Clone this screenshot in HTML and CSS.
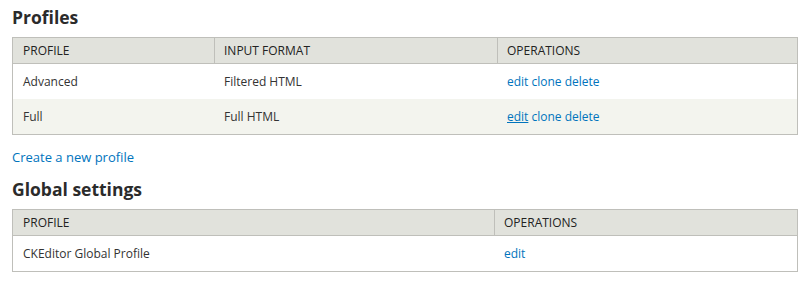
FILE: index.html
```html
<!DOCTYPE html>
<html lang="en">
<head>
<meta charset="utf-8">
<title>Profiles</title>
<link rel="stylesheet" href="styles.css">
</head>
<body>
<h2 class="section-title">Profiles</h2>
<table class="data-table">
  <thead>
    <tr>
      <th class="c-profile">Profile</th>
      <th class="c-format">Input format</th>
      <th class="c-ops">Operations</th>
    </tr>
  </thead>
  <tbody>
    <tr class="odd">
      <td>Advanced</td>
      <td>Filtered HTML</td>
      <td><a href="#">edit</a> <a href="#">clone</a> <a href="#">delete</a></td>
    </tr>
    <tr class="even">
      <td>Full</td>
      <td>Full HTML</td>
      <td><a href="#" class="hover">edit</a> <a href="#">clone</a> <a href="#">delete</a></td>
    </tr>
  </tbody>
</table>
<p class="create"><a href="#">Create a new profile</a></p>
<h2 class="section-title second">Global settings</h2>
<table class="data-table">
  <thead>
    <tr>
      <th class="c-gprofile">Profile</th>
      <th class="c-gops">Operations</th>
    </tr>
  </thead>
  <tbody>
    <tr class="odd">
      <td>CKEditor Global Profile</td>
      <td><a href="#">edit</a></td>
    </tr>
  </tbody>
</table>
</body>
</html>
```
FILE: styles.css
```css
html, body {
  background: #fff;
}
body {
  margin: 0;
  padding: 7px 12px 0 12px;
  font-family: "Open Sans", "Noto Sans", sans-serif;
  font-size: 12px;
  color: #333;
}
a {
  color: #0074bd;
  text-decoration: none;
}
a.hover {
  text-decoration: underline;
}
.section-title {
  margin: 0 0 10px 0;
  font-size: 17.5px;
  line-height: 20px;
  font-weight: bold;
  color: #2b2b2b;
}
.section-title.second {
  margin-top: 13px;
  margin-bottom: 10px;
}
.data-table {
  width: 786px;
  table-layout: fixed;
  border-collapse: separate;
  border-spacing: 0;
  border: 1px solid #bfbfba;
}
.data-table th {
  box-sizing: border-box;
  height: 26px;
  padding: 0 10px;
  background: #e1e2dc;
  border-bottom: 1px solid #bfbfba;
  text-align: left;
  text-transform: uppercase;
  font-weight: normal;
  font-size: 12px;
  color: #222;
}
.data-table th + th {
  border-left: 1px solid #bfbfba;
  padding-left: 9px;
}
.data-table td {
  height: 35px;
  padding: 0 10px;
  vertical-align: middle;
}
.data-table tr.even td {
  background: #f3f4ee;
}
.c-profile { width: 201px; }
.c-format { width: 283px; }
.c-ops { width: 300px; }
.c-gprofile { width: 481px; }
.c-gops { width: 303px; }
.create {
  margin: 13px 0 0 0;
  font-size: 13px;
  line-height: 18px;
}
```
